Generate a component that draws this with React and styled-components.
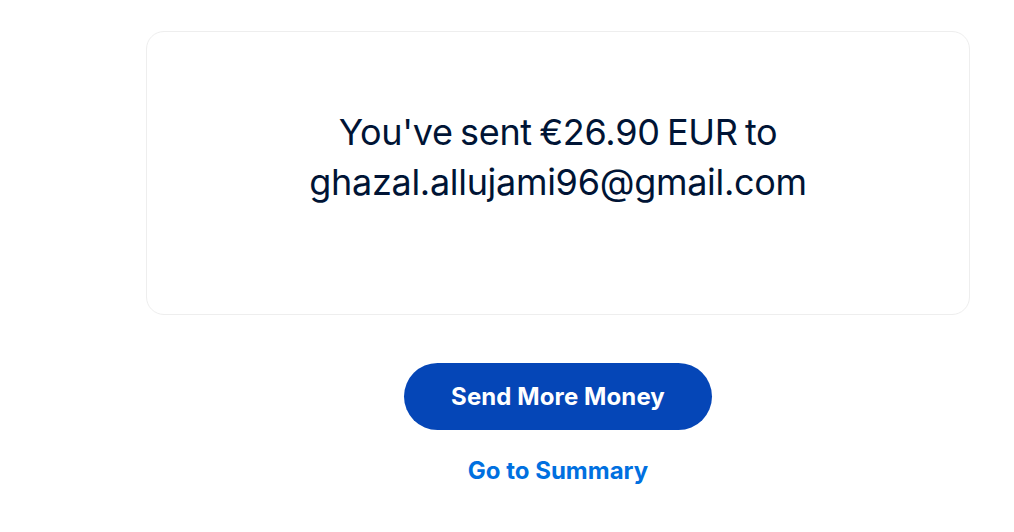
import React from 'react'
import styled, { createGlobalStyle } from 'styled-components'

const GlobalStyle = createGlobalStyle`
  body {
    margin: 0;
    background: #ffffff;
    font-family: Inter, "Liberation Sans", Arial, sans-serif;
  }
`

const Page = styled.div`
  width: 1014px;
  height: 532px;
  padding: 31px 44px 0 146px;
  box-sizing: border-box;
`

const Column = styled.div`
  display: flex;
  flex-direction: column;
  align-items: center;
  width: 824px;
`

const Card = styled.div`
  width: 100%;
  height: 284px;
  box-sizing: border-box;
  border: 1px solid #eeeeee;
  border-radius: 18px;
  display: flex;
  align-items: center;
  justify-content: center;
  padding-bottom: 32px;
`

const Message = styled.h1`
  margin: 0;
  font-family: Inter, "Liberation Sans", Arial, sans-serif;
  font-size: 36px;
  font-weight: 400;
  line-height: 50px;
  letter-spacing: -0.3px;
  word-spacing: -2.5px;
  color: #001435;
  text-align: center;
`

const PrimaryButton = styled.button`
  margin-top: 48px;
  width: 308px;
  height: 67px;
  border: none;
  border-radius: 34px;
  background: #0546b7;
  color: #ffffff;
  font-family: Inter, "Liberation Sans", Arial, sans-serif;
  font-size: 24px;
  font-weight: 700;
  letter-spacing: 0.1px;
  cursor: pointer;
`

const TextLink = styled.a`
  margin-top: 26px;
  font-size: 24px;
  font-weight: 700;
  letter-spacing: 0;
  color: #0070e0;
  text-decoration: none;
  cursor: pointer;
`

export default function App() {
  return (
    <>
      <GlobalStyle />
      <Page>
        <Column>
          <Card>
            <Message>
              You've sent €26.90 EUR to
              <br />
              ghazal.allujami96@gmail.com
            </Message>
          </Card>
          <PrimaryButton>Send More Money</PrimaryButton>
          <TextLink>Go to Summary</TextLink>
        </Column>
      </Page>
    </>
  )
}
